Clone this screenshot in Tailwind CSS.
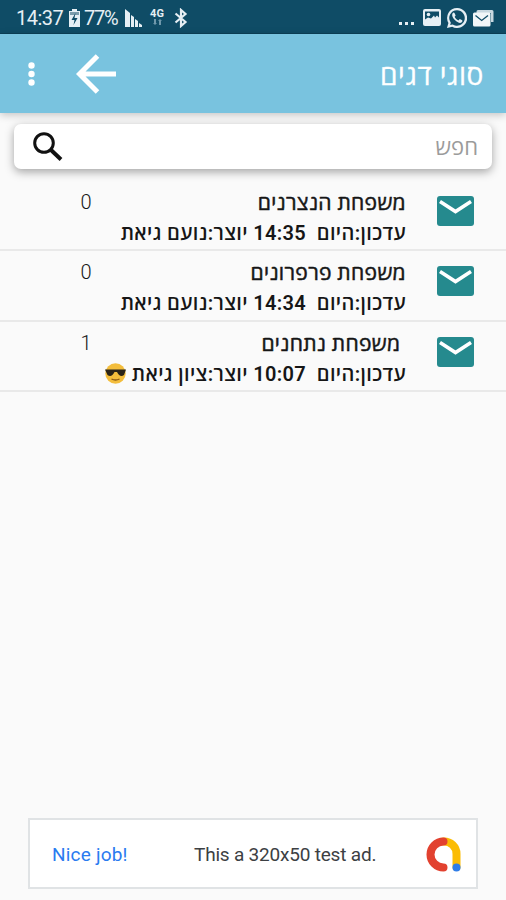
<!DOCTYPE html>
<html lang="he">
<head>
    <meta charset="utf-8">
    <meta name="viewport" content="width=device-width, initial-scale=1">
    <title>סוגי דגים</title>
    <script src="https://cdn.jsdelivr.net/npm/@tailwindcss/browser@4"></script>
</head>
<body class="h-[900px] w-[506px] overflow-hidden bg-[#fafafa] font-[Roboto,'Open_Sans',sans-serif] text-[#161616]">
<div class="flex h-full flex-col">
    <!-- Status bar -->
    <div class="flex h-[34px] shrink-0 items-center border-b border-[#0b4058] bg-[#0f4c66] pl-4 pr-3 pt-[2px] text-[#e6eff4]">
        <span class="w-[49px] whitespace-nowrap text-[20px] leading-none tracking-[-0.5px]">14:37</span>
        <svg class="ml-[3px] mr-[3px] h-[18px] w-[13px]" viewBox="0 0 13 18">
            <path d="M4 0h5v2h3v16H1V2h3z" fill="#e6eff4"/>
            <path d="M2 3h9v3H2z" fill="#7c9cab"/>
            <path d="M7.500 4 3.500 11h3L5.500 16 9.500 9h-3z" fill="#0f4c66"/>
        </svg>
        <span class="w-[35px] whitespace-nowrap text-[20px] leading-none tracking-[-1.2px]">77%</span>
        <svg class="ml-[6px] h-[18px] w-[18px]" viewBox="0 0 18 18" fill="#e6eff4">
            <path d="M0 0l5 4v14H0zM6 6l3 2v10H6zM10 10l3 2v6h-3zM14 14l3 2v2h-3z"/>
        </svg>
        <div class="-mt-[2px] ml-[6px] flex w-[16px] flex-col items-center">
            <span class="text-[11px] font-bold leading-[10px]">4G</span>
            <svg class="h-[6px] w-[9px]" viewBox="0 0 9 6" fill="#6f98ab"><path d="M1 0h2v4h1L2 6 0 4h1zM6 6h2V2h1L7 0 5 2h1z"/></svg>
        </div>
        <svg class="ml-[9px] h-[20px] w-[14px]" viewBox="0 0 14 20" fill="none" stroke="#e6eff4" stroke-width="2.200">
            <path d="M1.500 5.500 11.500 14 7 18V2l4.500 4-10 8.500"/>
        </svg>
        <div class="ml-auto flex items-center">
            <svg class="mr-[9px] mt-[11px] h-[3px] w-[15px]" viewBox="0 0 15 3" fill="#e6eff4"><path d="M0 0h3v3H0zM6 0h3v3H6zM12 0h3v3h-3z"/></svg>
            <svg class="mr-[6px] h-[17px] w-[18px]" viewBox="0 0 18 17">
                <rect width="18" height="17" rx="2" fill="#e6eff4"/>
                <path d="M2 2.500h14v6l-2-2-2 2-1-2-3 3-3-1-3 2z" fill="#0f4c66"/>
                <circle cx="5.500" cy="5.500" r="1.800" fill="#e6eff4"/>
            </svg>
            <svg class="mr-[6px] h-[20px] w-[20px]" viewBox="0 0 24 24" fill="#e6eff4">
                <path d="M12 0a12 12 0 0 0-10.300 18L0 24l6.200-1.600A12 12 0 1 0 12 0zm0 2.700a9.300 9.300 0 1 1-5.200 17l-3 .8.800-2.900A9.300 9.300 0 0 1 12 2.700z"/>
                <path d="M8 5.500c-3 1.500-2 5.500 1.500 9s7.500 5 9 1.500l-.2-1.300-3-1.400-1.600 1.600c-2-.8-3.600-2.400-4.500-4.300L10.400 9 9 6z"/>
            </svg>
            <svg class="h-[18px] w-[21px]" viewBox="0 0 21 18">
                <path d="M5 1h14a1.500 1.500 0 0 1 1.500 1.500V13H18V4H3.500V2.500A1.500 1.500 0 0 1 5 1z" fill="#c8d8e0"/>
                <rect x="0" y="3.500" width="17.500" height="14" rx="1.500" fill="#f1f6f8"/>
                <path d="m2.500 6.500 6.200 5L15 6.500" fill="none" stroke="#0f4c66" stroke-width="1.300"/>
            </svg>
        </div>
    </div>

    <!-- App bar -->
    <header class="relative z-10 flex h-[79px] shrink-0 items-center bg-[#79c3df] pl-[28px] pr-[22px] text-white shadow-[0_2px_8px_rgba(0,0,0,0.22)]">
        <svg class="h-[24px] w-[7px]" viewBox="0 0 7 24" fill="#fff">
            <circle cx="3.500" cy="3.500" r="3.200"/><circle cx="3.500" cy="12" r="3.200"/><circle cx="3.500" cy="20.500" r="3.200"/>
        </svg>
        <svg class="ml-[41px] h-[40px] w-[41px]" viewBox="0 0 41 40" fill="none" stroke="#fff" stroke-width="5">
            <path d="M21.500 2 3.500 20l18 18M3.500 20H40"/>
        </svg>
        <h1 dir="rtl" class="ml-auto mt-[4px] whitespace-nowrap text-[28px] leading-none tracking-[0.6px] [-webkit-text-stroke:0.3px]">סוגי דגים</h1>
    </header>

    <!-- Search -->
    <div class="px-[14px] pt-[11px]">
        <div class="flex h-[45px] items-center justify-between rounded-[7px] bg-white pl-[19px] pr-[14px] shadow-[0_3px_10px_rgba(0,0,0,0.35)]">
            <svg class="h-[29px] w-[30px]" viewBox="0 0 30 29" fill="none" stroke="#111">
                <circle cx="11" cy="11" r="9.300" stroke-width="3"/>
                <path d="m17.500 17.500 10.500 10" stroke-width="4"/>
            </svg>
            <span dir="rtl" class="mt-[2px] text-[22px] leading-none text-[#9b9b9b]">חפש</span>
        </div>
    </div>

    <!-- Topics -->
    <ul class="mt-[12px]">
        <li dir="rtl" class="flex h-[70px] border-b-2 border-[#e9e9e9] pr-[32px] pt-[8px]">
            <svg class="mt-[3px] h-[38px] w-[37px] shrink-0" viewBox="0 0 37 38">
                <rect y="4" width="37" height="30" rx="3" fill="#258a8e"/>
                <path d="m3 9.500 15.500 10L34 9.500" fill="none" stroke="#fff" stroke-width="3.600"/>
            </svg>
            <div class="mr-[31px]">
                <div class="flex h-[29px] items-center text-[21px] font-medium tracking-[0.35px] [-webkit-text-stroke:0.5px]"><span class="whitespace-pre">משפחת הנצרנים</span></div>
                <div class="flex h-[29px] items-center text-[20px] font-semibold tracking-[0.35px]"><span class="whitespace-pre">עדכון:היום  14:35 יוצר:נועם גיאת</span></div>
            </div>
            <span class="mr-auto ml-[80px] h-[30px] w-[12px] text-center text-[20px] font-light leading-[27px]">0</span>
        </li>
        <li dir="rtl" class="flex h-[71px] border-b-2 border-[#e9e9e9] pr-[32px] pt-[8px]">
            <svg class="mt-[3px] h-[38px] w-[37px] shrink-0" viewBox="0 0 37 38">
                <rect y="4" width="37" height="30" rx="3" fill="#258a8e"/>
                <path d="m3 9.500 15.500 10L34 9.500" fill="none" stroke="#fff" stroke-width="3.600"/>
            </svg>
            <div class="mr-[31px]">
                <div class="flex h-[29px] items-center text-[21px] font-medium tracking-[0.35px] [-webkit-text-stroke:0.5px]"><span class="whitespace-pre">משפחת פרפרונים</span></div>
                <div class="flex h-[29px] items-center text-[20px] font-semibold tracking-[0.35px]"><span class="whitespace-pre">עדכון:היום  14:34 יוצר:נועם גיאת</span></div>
            </div>
            <span class="mr-auto ml-[80px] h-[30px] w-[12px] text-center text-[20px] font-light leading-[27px]">0</span>
        </li>
        <li dir="rtl" class="flex h-[70px] border-b-2 border-[#e9e9e9] pr-[32px] pt-[8px]">
            <svg class="mt-[3px] h-[38px] w-[37px] shrink-0" viewBox="0 0 37 38">
                <rect y="4" width="37" height="30" rx="3" fill="#258a8e"/>
                <path d="m3 9.500 15.500 10L34 9.500" fill="none" stroke="#fff" stroke-width="3.600"/>
            </svg>
            <div class="mr-[31px]">
                <div class="flex h-[29px] items-center text-[21px] font-medium tracking-[0.35px] [-webkit-text-stroke:0.5px]"><span class="whitespace-pre"> משפחת נתחנים</span></div>
                <div class="flex h-[29px] items-center text-[20px] font-semibold tracking-[0.35px]">
                    <span class="whitespace-pre">עדכון:היום  10:07 יוצר:ציון גיאת</span>
                    <svg class="mr-[6px] h-[21px] w-[21px]" viewBox="0 0 21 21">
                        <circle cx="10.500" cy="10.500" r="10.200" fill="#f3bd3c"/>
                        <path d="M0 6.500h21l-2 5.500q-4 3-7-3H9.500q-3 6-7 3z" fill="#2a2418"/>
                        <path d="M6.500 16q4 2 8 0" fill="none" stroke="#8a5a14" stroke-width="1.300"/>
                    </svg>
                </div>
            </div>
            <span class="mr-auto ml-[80px] h-[30px] w-[12px] text-center text-[20px] font-light leading-[27px]">1</span>
        </li>
    </ul>

    <!-- Ad banner -->
    <div class="mx-[28px] mb-[11px] mt-auto flex h-[71px] items-center border-2 border-[#e0e3e5] bg-white pl-[22px] pr-[15px] pt-[2px] font-[Roboto,sans-serif] text-[19px] leading-none">
        <span class="w-[142px] whitespace-nowrap tracking-[0.2px] text-[#2a7bf0]">Nice job!</span>
        <span class="whitespace-nowrap tracking-[-0.2px] text-[#3c4043]">This a 320x50 test ad.</span>
        <svg class="ml-auto h-[35px] w-[35px]" viewBox="0 0 35 35" fill="none" stroke-width="8" stroke-linecap="round">
            <path d="M17.500 4.500A12.500 12.500 0 0 1 30.500 17v13" stroke="#fbbc04"/>
            <path d="M17.500 4.500a13 13 0 0 0 0 26" stroke="#e2412f"/>
            <circle cx="30.500" cy="30.500" r="4" fill="#2f7de9"/>
        </svg>
    </div>
</div>
</body>
</html>
